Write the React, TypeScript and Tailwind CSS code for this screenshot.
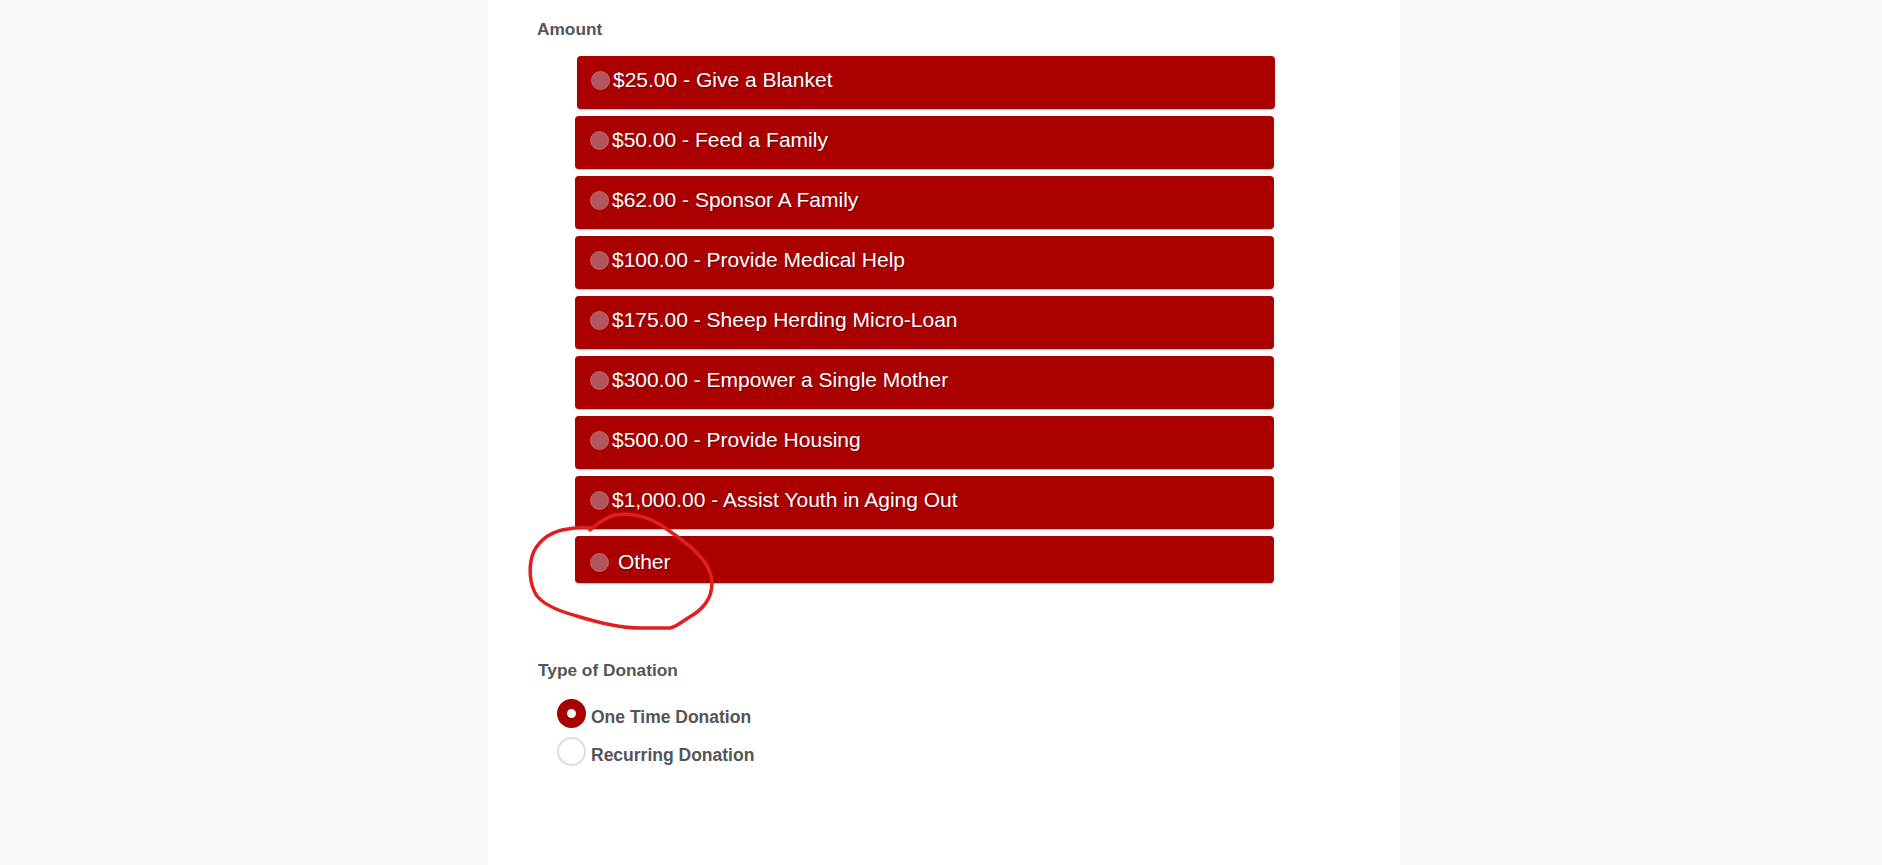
import React from "react";

const amounts = [
  "$25.00 - Give a Blanket",
  "$50.00 - Feed a Family",
  "$62.00 - Sponsor A Family",
  "$100.00 - Provide Medical Help",
  "$175.00 - Sheep Herding Micro-Loan",
  "$300.00 - Empower a Single Mother",
  "$500.00 - Provide Housing",
  "$1,000.00 - Assist Youth in Aging Out",
];

function Dot() {
  return (
    <span className="block w-[19px] h-[19px] rounded-full bg-[#b3555c] border border-[#bb6a70] shrink-0" />
  );
}

export default function App() {
  return (
    <div
      className="relative min-h-[865px] w-full bg-[#f9f9f9] flex"
      style={{ fontFamily: '"Liberation Sans", Arial, sans-serif' }}
    >
      <div className="ml-[488px] w-[913px] min-h-[865px] bg-white pt-[19px]">
        <div className="pl-[49px] text-[17.3px] leading-[20px] font-bold text-[#555555]">Amount</div>
        <div className="mt-[17px] pl-[87px] flex flex-col gap-[7px]">
          {amounts.map((a, i) => (
            <div
              key={a}
              className={
                i === 0
                  ? "ml-[2px] w-[698px] h-[53px] rounded-[4px] bg-[#ab0000] shadow-[0_1px_1px_rgba(0,0,0,0.25)] flex items-start pt-[12px] pl-[14px]"
                  : "w-[699px] h-[53px] rounded-[4px] bg-[#ab0000] shadow-[0_1px_1px_rgba(0,0,0,0.25)] flex items-start pt-[12px] pl-[15px]"
              }
            >
              <div className="flex items-center gap-[3px]">
                <Dot />
                <span className="text-white text-[21px] leading-[24px] [text-shadow:1px_1px_1px_rgba(60,0,0,0.6)]">
                  {a}
                </span>
              </div>
            </div>
          ))}
          <div className="w-[699px] h-[47px] rounded-[4px] bg-[#ab0000] shadow-[0_1px_1px_rgba(0,0,0,0.25)] flex items-start pt-[14px] pl-[15px]">
            <div className="flex items-center gap-[9px]">
              <Dot />
              <span className="text-white text-[21px] leading-[24px] [text-shadow:1px_1px_1px_rgba(60,0,0,0.6)]">
                Other
              </span>
            </div>
          </div>
        </div>

        <div className="mt-[77px] pl-[50px] text-[17.3px] leading-[20px] font-bold text-[#555555]">
          Type of Donation
        </div>
        <div className="mt-[19px] pl-[69px] flex flex-col gap-[9px]">
          <div className="flex items-start gap-[5px]">
            <span className="block w-[29px] h-[29px] rounded-full border-[10px] border-[#a80000] bg-white shrink-0" />
            <span className="mt-[8px] text-[17.5px] leading-[20px] font-bold text-[#555555]">One Time Donation</span>
          </div>
          <div className="flex items-start gap-[5px]">
            <span className="block w-[29px] h-[29px] rounded-full border-2 border-[#dddddd] bg-white shrink-0" />
            <span className="mt-[8px] text-[17.5px] leading-[20px] font-bold text-[#555555]">Recurring Donation</span>
          </div>
        </div>
      </div>

      <svg
        className="absolute left-0 top-0 pointer-events-none"
        width="1882"
        height="865"
        viewBox="0 0 1882 865"
      >
        <path
          d="M 590 530 C 596 525, 603 518, 615 515 C 635 512, 652 518, 668 530 C 690 545, 712 562, 712 583 C 712 600, 702 610, 688 618 C 680 623, 676 627, 670 628 L 640 628 C 620 628, 600 623, 580 617 C 563 612, 546 607, 537 596 C 529 584, 528 565, 534 551 C 540 540, 550 533, 562 530 C 575 527, 584 527, 591 528"
          fill="none"
          stroke="#e21f1f"
          strokeWidth="3.5"
          strokeLinecap="round"
          strokeLinejoin="round"
        />
      </svg>
    </div>
  );
}
